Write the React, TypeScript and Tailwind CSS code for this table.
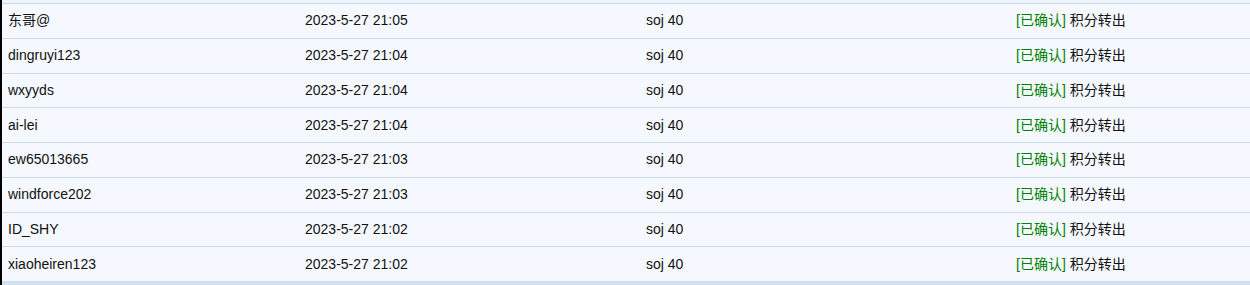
import React from "react";

const rows = [
  ["东哥@", "2023-5-27 21:05"],
  ["dingruyi123", "2023-5-27 21:04"],
  ["wxyyds", "2023-5-27 21:04"],
  ["ai-lei", "2023-5-27 21:04"],
  ["ew65013665", "2023-5-27 21:03"],
  ["windforce202", "2023-5-27 21:03"],
  ["ID_SHY", "2023-5-27 21:02"],
  ["xiaoheiren123", "2023-5-27 21:02"],
];

export default function App() {
  return (
    <div
      className="w-[1250px] h-[285px] overflow-hidden bg-[#f5f9ff] flex"
      style={{ fontFamily: '"Liberation Sans", Arial, "Noto Sans CJK SC", sans-serif' }}
    >
      <div className="w-[2px] bg-black shrink-0" />
      <div className="flex-1 flex flex-col">
        <div className="h-[4px] bg-[#eef4fb] border-b border-[#c9d9e8]" />
        {rows.map(([name, time], i) => (
          <div
            key={i}
            className="h-[34.75px] shrink-0 flex items-center border-b border-[#cfdce8] text-[14px] text-[#111]"
          >
            <div className="w-[303px] pl-[6px]">{name}</div>
            <div className="w-[341px]">{time}</div>
            <div className="w-[370px]">soj 40</div>
            <div>
              <span className="text-[#008000]">[已确认]</span> 积分转出
            </div>
          </div>
        ))}
        <div className="flex-1 bg-[#d3e0ee]" />
      </div>
    </div>
  );
}
